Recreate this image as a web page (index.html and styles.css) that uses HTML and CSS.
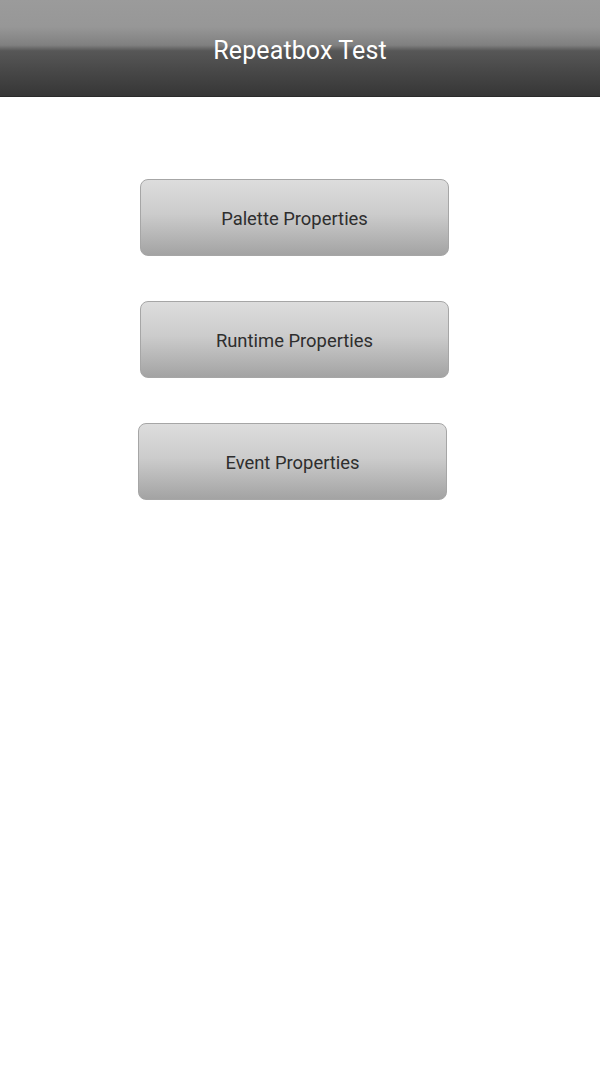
FILE: index.html
```html
<!DOCTYPE html>
<html>
<head>
<meta charset="utf-8">
<link rel="stylesheet" href="styles.css">
</head>
<body>
<header class="titlebar"><h1 class="title">Repeatbox Test</h1></header>
<main class="menu">
  <button class="btn">Palette Properties</button>
  <button class="btn">Runtime Properties</button>
  <button class="btn btn-shift">Event Properties</button>
</main>
</body>
</html>
```
FILE: styles.css
```css
html, body {
  margin: 0;
  padding: 0;
  background: #ffffff;
  font-family: Roboto, "Liberation Sans", sans-serif;
}
.titlebar {
  height: 96px;
  border-bottom: 1px solid #2a2a2a;
  background: linear-gradient(to bottom, #9b9b9b 0%, #979797 28%, #808080 47%, #575757 53%, #474747 75%, #363636 100%);
  display: flex;
  align-items: center;
  justify-content: center;
}
.title {
  margin: 0;
  color: #ffffff;
  font-weight: 400;
  font-size: 25px;
  letter-spacing: 0.1px;
  padding-top: 4px;
}
.menu {
  display: flex;
  flex-direction: column;
  align-items: flex-start;
  gap: 45px;
  padding: 82px 0 0 140px;
}
.btn {
  width: 309px;
  height: 77px;
  box-sizing: border-box;
  border: 1px solid #a6a6a6;
  border-radius: 8px;
  background: linear-gradient(to bottom, #dddddd 0%, #cccccc 45%, #a3a3a3 100%);
  color: #2e2e2e;
  font-family: Roboto, "Liberation Sans", sans-serif;
  font-size: 18.4px;
  padding: 2px 0 0 0;
}
.btn-shift {
  margin-left: -2px;
}
```
